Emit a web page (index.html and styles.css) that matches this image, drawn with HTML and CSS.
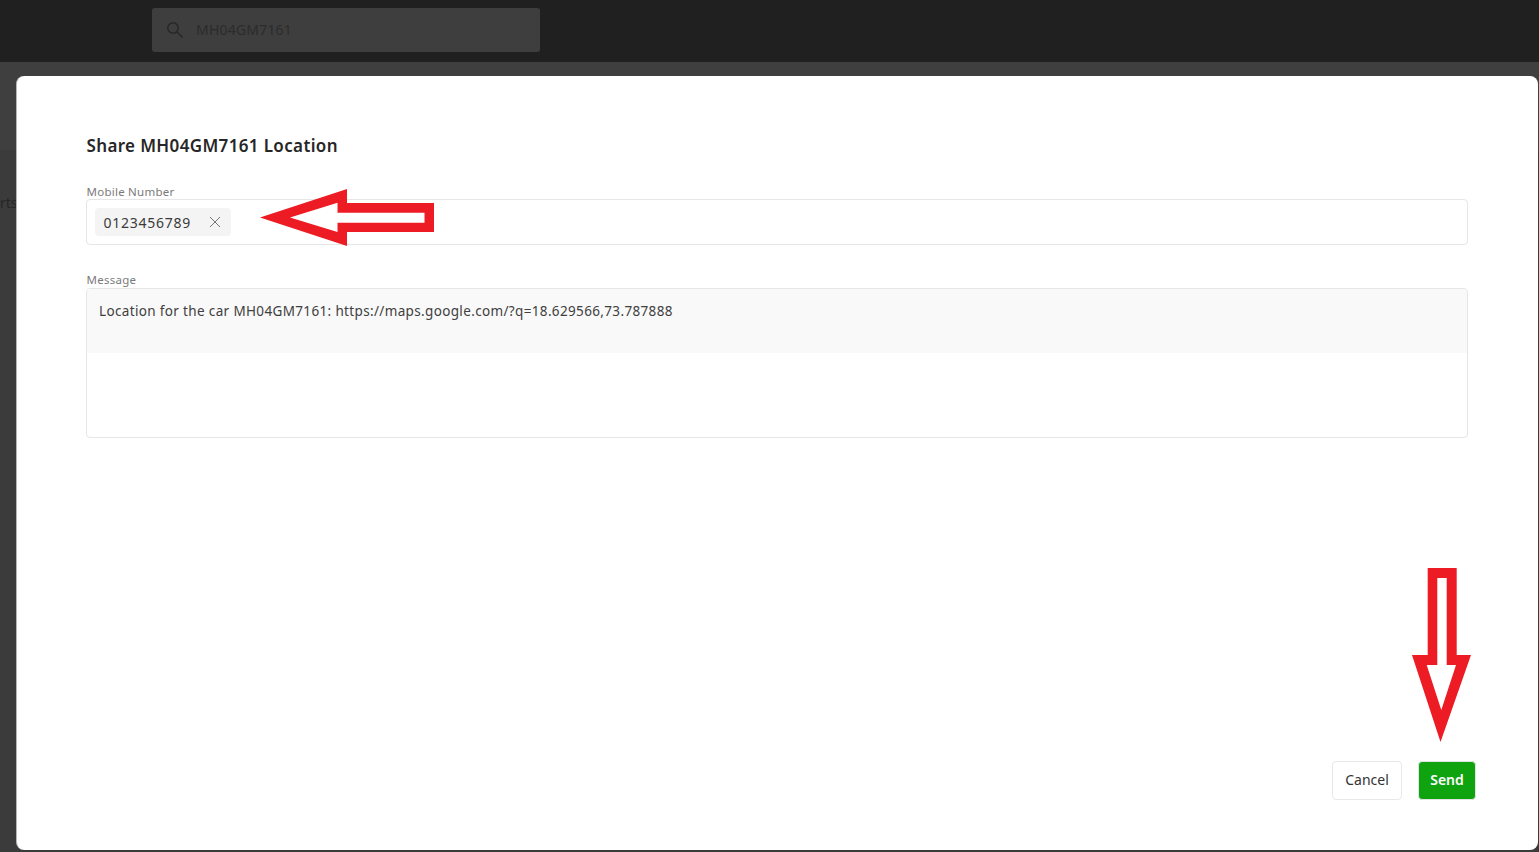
FILE: index.html
```html
<!DOCTYPE html>
<html lang="en">
<head>
<meta charset="utf-8">
<title>Share Location</title>
<link rel="stylesheet" href="styles.css">
</head>
<body>
<div class="app">
  <header class="topbar">
    <div class="search">
      <svg class="search-icon" viewBox="0 0 18 18" width="18" height="18"><circle cx="7" cy="7" r="5.2"/><path d="M11 11l5.6 5.6"/></svg>
      <span class="search-text">MH04GM7161</span>
    </div>
  </header>
  <div class="subbar"></div>
  <div class="behind"><span class="behind-text">rts</span></div>
</div>
<section class="modal">
  <h1 class="title">Share MH04GM7161 Location</h1>
  <div class="field field-mobile">
    <div class="label">Mobile Number</div>
    <div class="box box-mobile">
      <span class="chip"><span class="chip-text">0123456789</span>
        <svg class="chip-x" viewBox="0 0 10 10" width="10" height="10"><path d="M0 0l10 10M10 0L0 10"/></svg>
      </span>
    </div>
  </div>
  <div class="field field-message">
    <div class="label">Message</div>
    <div class="box box-message">
      <div class="message-fill">Location for the car MH04GM7161: https://maps.google.com/?q=18.629566,73.787888</div>
    </div>
  </div>
  <div class="actions">
    <button class="btn btn-cancel"><span class="btn-label">Cancel</span></button>
    <button class="btn btn-send"><span class="btn-label">Send</span></button>
  </div>
</section>
<svg class="arrow arrow-left" viewBox="259 188 176 59" width="176" height="59">
  <path class="arrow-red" d="M260 217.500 L347 189 V203 H434 V232 H347 V246 Z"/>
  <path class="arrow-white" d="M290 217.500 L337.500 202.700 V212.700 H424.500 V222.700 H337.500 V232 Z"/>
</svg>
<svg class="arrow arrow-down" viewBox="1411 567 61 176" width="61" height="176">
  <path class="arrow-red" d="M1427.700 568 H1456.700 V655 H1471 L1440.500 742 L1412 655 H1427.700 Z"/>
  <path class="arrow-white" d="M1437.300 578 H1446.700 V665 H1456 L1441.300 710 L1426.700 665 H1437.300 Z"/>
</svg>
</body>
</html>
```
FILE: styles.css
```css
* { box-sizing: border-box; }
html, body { margin: 0; height: 100%; }
body { position: relative; width: 1539px; height: 852px; overflow: hidden; background: #3b3b3b; font-family: "Noto Sans", "Open Sans", sans-serif; color: #262626; }
.app { display: flex; flex-direction: column; height: 852px; }
.topbar { height: 62px; background: #202020; padding: 8px 0 10px 152px; flex: none; }
.search { width: 388px; height: 44px; background: #3e3e3e; border-radius: 3px; display: flex; align-items: center; padding-left: 14px; gap: 12px; }
.search-icon { fill: none; stroke: #262626; stroke-width: 1.4; flex: none; }
.search-text { font-size: 14px; line-height: 18px; letter-spacing: .2px; color: #2c2c2c; margin-top: -1px; }
.subbar { height: 88px; background: #3f3f3f; flex: none; }
.behind { flex: 1; padding: 41px 0 0 0; }
.behind-text { font-size: 14px; color: #262626; }
.modal { position: absolute; left: 16px; top: 76px; width: 1522px; height: 774px; background: #fff; border-left: 1px solid #b5b5b5; border-radius: 8px; padding: 59px 70px 0 69px; }
.title { margin: 0; font-size: 17px; line-height: 22px; font-weight: 600; color: #262626; letter-spacing: .36px; padding-left: .5px; }
.field-mobile { margin-top: 28px; }
.field-message { margin-top: 28px; }
.label { font-size: 11.500px; line-height: 14px; color: #7a7a7a; letter-spacing: .25px; padding-left: .5px; }
.box { width: 1382px; border: 1px solid #e6e6e6; border-radius: 4px; background: #fff; }
.box-mobile { height: 46px; margin-top: 0; padding: 8px; display: flex; align-items: flex-start; }
.chip { width: 136px; height: 28px; background: #f4f4f4; border-radius: 4px; display: flex; align-items: center; padding-left: 8px; font-size: 14px; color: #3a3a3a; }
.chip-text { letter-spacing: .75px; width: 107px; padding-left: .5px; }
.chip-x { stroke: #777; stroke-width: 1; fill: none; flex: none; }
.box-message { height: 150px; margin-top: 1px; overflow: hidden; }
.message-fill { height: 64px; background: #f9f9f9; padding: 12px 12px 0; font-size: 13.500px; line-height: 20px; color: #404040; letter-spacing: .35px; }
.actions { position: absolute; right: 62px; bottom: 50px; display: flex; gap: 16px; }
.btn { height: 39px; border-radius: 4px; font-family: inherit; font-size: 14px; padding: 0; display: flex; align-items: center; justify-content: center; }
.btn-label { margin-top: -2px; }
.btn-cancel { width: 70px; background: #fff; border: 1px solid #e8e8e8; color: #333; }
.btn-send { width: 58px; background: #0fa30f; border: 1px solid #e3e3e3; color: #fff; font-weight: 600; }
.arrow { position: absolute; }
.arrow-red { fill: #ed1c24; }
.arrow-white { fill: #fff; }
.arrow-left { left: 259px; top: 188px; }
.arrow-down { left: 1411px; top: 567px; }
```
